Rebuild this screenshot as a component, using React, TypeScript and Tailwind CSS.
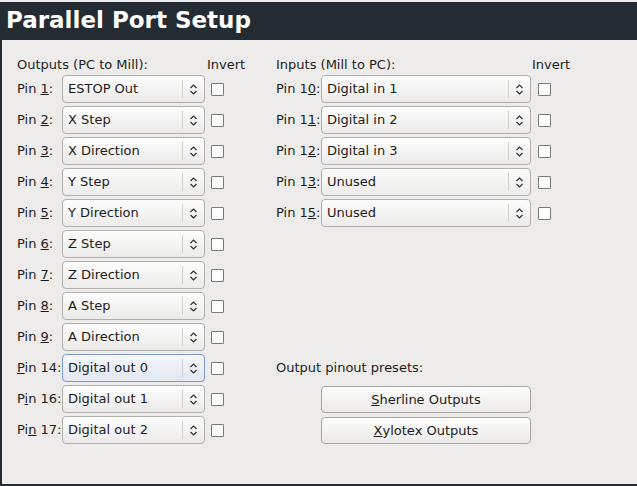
import React from "react";

const font = { fontFamily: '"DejaVu Sans", "Liberation Sans", sans-serif' };

function Chevron() {
  return (
    <svg width="9" height="13" viewBox="0 0 9 13" className="block">
      <path d="M1.5 5 L4.5 2 L7.5 5" fill="none" stroke="#2e3436" strokeWidth="1.2" />
      <path d="M1.5 8 L4.5 11 L7.5 8" fill="none" stroke="#2e3436" strokeWidth="1.2" />
    </svg>
  );
}

function Combo({ value, width, focused }: { value: string; width: string; focused?: boolean }) {
  return (
    <div
      className={
        "h-[28px] flex items-center rounded-[4px] border " +
        width +
        (focused
          ? " border-[#7d9ccd] bg-gradient-to-b from-[#f4f7fb] to-[#e1e7ef]"
          : " border-[#b2b0ac] bg-gradient-to-b from-[#fdfdfd] to-[#ecebea]")
      }
    >
      <span className="flex-1 pl-[5px] text-[13px] leading-[16px] text-[#1c1c1c] whitespace-nowrap">{value}</span>
      <div className="w-px h-[18px] bg-[#d3d1ce]" />
      <div className="w-[21px] flex justify-center">
        <Chevron />
      </div>
    </div>
  );
}

function Check() {
  return <div className="w-[13px] h-[13px] border border-[#7a7976] bg-white rounded-[1px] shrink-0" />;
}

function Label({ children, w }: { children: React.ReactNode; w: string }) {
  return <div className={"text-[13px] leading-[16px] text-[#1c1c1c] whitespace-nowrap " + w}>{children}</div>;
}

const leftRows: [React.ReactNode, string][] = [
  [<>Pin <u>1</u>:</>, "ESTOP Out"],
  [<>Pin <u>2</u>:</>, "X Step"],
  [<>Pin <u>3</u>:</>, "X Direction"],
  [<>Pin <u>4</u>:</>, "Y Step"],
  [<>Pin <u>5</u>:</>, "Y Direction"],
  [<>Pin <u>6</u>:</>, "Z Step"],
  [<>Pin <u>7</u>:</>, "Z Direction"],
  [<>Pin <u>8</u>:</>, "A Step"],
  [<>Pin <u>9</u>:</>, "A Direction"],
  [<><u>P</u>in 14:</>, "Digital out 0"],
  [<>P<u>i</u>n 16:</>, "Digital out 1"],
  [<>Pi<u>n</u> 17:</>, "Digital out 2"],
];

const rightRows: [React.ReactNode, string][] = [
  [<>Pin 1<u>0</u>:</>, "Digital in 1"],
  [<>Pin 1<u>1</u>:</>, "Digital in 2"],
  [<>Pin 1<u>2</u>:</>, "Digital in 3"],
  [<>Pin 1<u>3</u>:</>, "Unused"],
  [<>Pin 1<u>5</u>:</>, "Unused"],
];

function Button({ children }: { children: React.ReactNode }) {
  return (
    <div className="ml-[45px] w-[210px] h-[27px] flex items-center justify-center rounded-[4px] border border-[#a9a7a3] bg-gradient-to-b from-[#fdfdfd] to-[#ebeae8] text-[13px] leading-[16px] text-[#1c1c1c]">
      {children}
    </div>
  );
}

export default function App() {
  return (
    <div style={font} className="w-[637px] h-[486px] flex flex-col bg-[#edecea] overflow-hidden">
      <div className="h-[2px] bg-[#edecea]" />
      <div className="h-[38px] bg-[#252b33] pl-[6px] pt-[7px]">
        <div className="text-[23px] leading-[23px] font-bold text-white whitespace-nowrap">Parallel Port Setup</div>
      </div>
      <div className="flex-1 border-l-2 border-b-2 border-[#252b33] pl-[15px] pt-[17px] flex">
        {/* Left column */}
        <div className="w-[259px] flex flex-col">
          <div className="flex h-[17px] mb-[1px]">
            <Label w="w-[190px]">Outputs (PC to Mill):</Label>
            <Label w="">Invert</Label>
          </div>
          <div className="flex flex-col gap-[3px]">
            {leftRows.map(([l, v], i) => (
              <div key={i} className="flex items-center h-[28px]">
                <Label w="w-[45px]">{l}</Label>
                <Combo value={v} width="w-[143px]" focused={i === 9} />
                <div className="ml-[6px]">
                  <Check />
                </div>
              </div>
            ))}
          </div>
        </div>
        {/* Right column */}
        <div className="flex flex-col">
          <div className="flex h-[17px] mb-[1px]">
            <Label w="w-[256px]">Inputs (Mill to PC):</Label>
            <Label w="">Invert</Label>
          </div>
          <div className="flex flex-col gap-[3px]">
            {rightRows.map(([l, v], i) => (
              <div key={i} className="flex items-center h-[28px]">
                <Label w="w-[45px]">{l}</Label>
                <Combo value={v} width="w-[210px]" />
                <div className="ml-[7px]">
                  <Check />
                </div>
              </div>
            ))}
            <div className="h-[121px]" />
            <div className="flex items-center h-[28px]">
              <Label w="">Output pinout presets:</Label>
            </div>
            <div className="pt-[1px] flex flex-col gap-[4px]">
              <Button>
                <span><u>S</u>herline Outputs</span>
              </Button>
              <Button>
                <span><u>X</u>ylotex Outputs</span>
              </Button>
            </div>
          </div>
        </div>
      </div>
    </div>
  );
}
